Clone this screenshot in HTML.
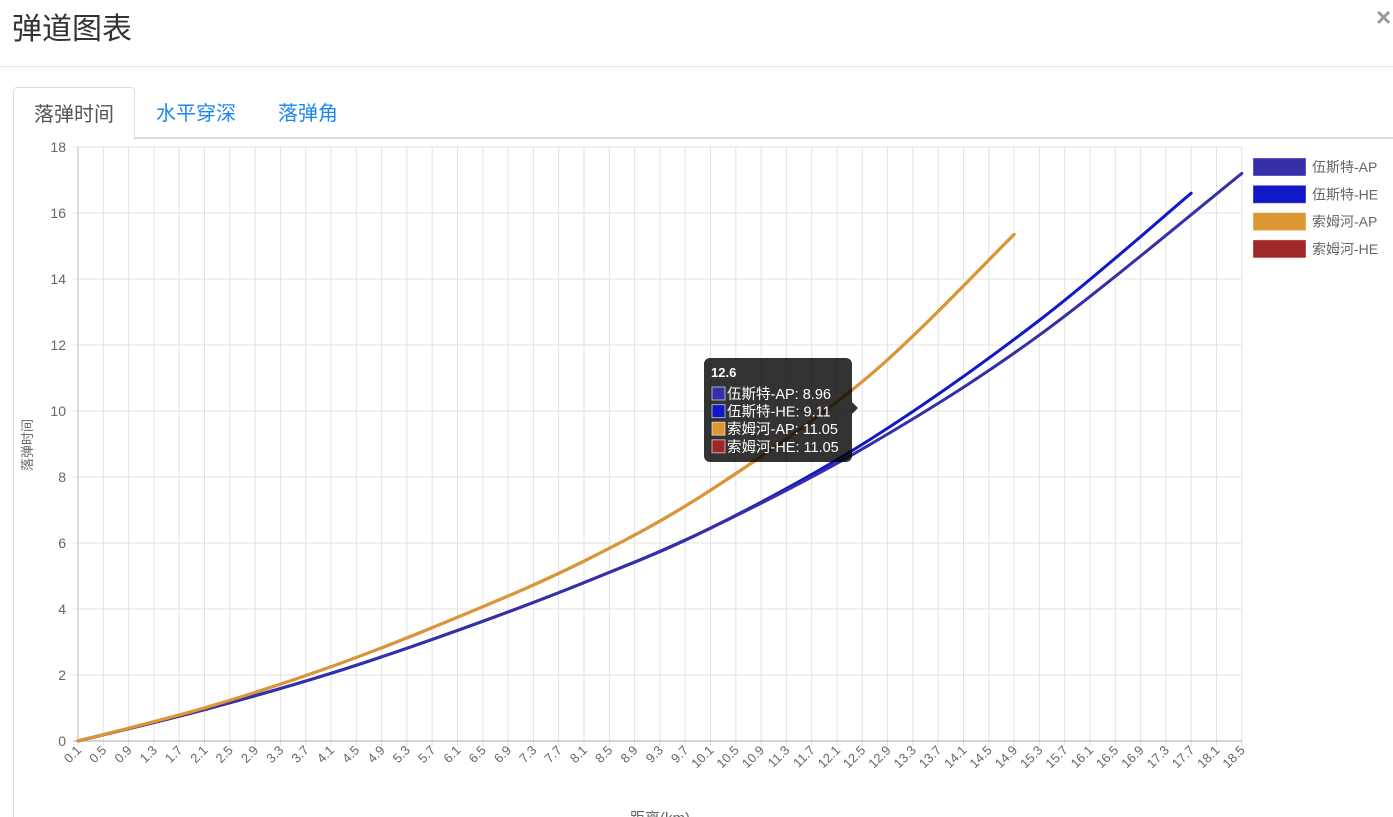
<!DOCTYPE html>
<html><head><meta charset="utf-8"><style>
body{margin:0;width:1393px;height:817px;overflow:hidden;background:#fff;font-family:"Liberation Sans","Noto Sans CJK SC",sans-serif;position:relative}
.t{position:absolute;left:12px;top:4px;font-size:30px;color:#333}
.x{position:absolute;left:1376px;top:2px;font-size:26px;color:#999;font-weight:bold}
.hr{position:absolute;left:0;top:66px;width:1393px;height:1px;background:#e5e5e5}
.bar{position:absolute;left:13px;top:137px;width:1380px;height:2px;background:#ddd}
.tab{position:absolute;top:87px;height:51px;font-size:20px;line-height:54px}
.a{left:13px;width:120px;border:1px solid #ddd;border-bottom:none;border-radius:4px 4px 0 0;background:#fff;color:#555;text-align:center;height:52px;z-index:2}
.vl{position:absolute;left:13px;top:139px;width:1px;height:678px;background:#ddd}
svg{position:absolute;left:0;top:0}
</style></head><body>
<div class="t">弹道图表</div><div class="x">×</div><div class="hr"></div>
<div class="bar"></div>
<div class="tab a">落弹时间</div>
<div class="tab" style="left:156px;color:#1e87f0">水平穿深</div>
<div class="tab" style="left:278px;color:#1e87f0">落弹角</div>
<div class="vl"></div>
<svg id="s" width="1393" height="817" font-family="Liberation Sans, Noto Sans CJK SC, sans-serif"></svg>
<script>
var s=document.getElementById('s'),h='';
function X(k){return 78+(k-0.1)/0.4*25.3}function Y(v){return 741-v*33}
for(var i=0;i<=46;i++){var x=X(0.1+i*0.4);h+='<line x1="'+x+'" y1="147" x2="'+x+'" y2="746" stroke="#e3e3e3"/>';
h+='<text transform="translate('+(x+4)+',751) rotate(-45)" text-anchor="end" font-size="13" fill="#666">'+(0.1+i*0.4).toFixed(1)+'</text>';}
for(var j=0;j<=9;j++){var y=Y(j*2);h+='<line x1="73" y1="'+y+'" x2="1242" y2="'+y+'" stroke="'+(j==0?'#aaa':'#e3e3e3')+'"/>';
h+='<text x="66" y="'+(y+5)+'" text-anchor="end" font-size="14" fill="#666">'+(j*2)+'</text>';}
h+='<line x1="78" y1="147" x2="78" y2="741" stroke="#bbb"/>';
function path(p,c){var pts=p.map(function(a){return[X(a[0]),Y(a[1])]});var d='M'+pts[0];
for(var i=0;i<pts.length-1;i++){var p0=pts[i-1]||pts[i],p1=pts[i],p2=pts[i+1],p3=pts[i+2]||p2;
d+='C'+(p1[0]+(p2[0]-p0[0])/6)+','+(p1[1]+(p2[1]-p0[1])/6)+' '+(p2[0]-(p3[0]-p1[0])/6)+','+(p2[1]-(p3[1]-p1[1])/6)+' '+p2;}
return '<path d="'+d+'" fill="none" stroke="'+c+'" stroke-width="3" stroke-linecap="round"/>';}
var sa=[[0.1,0],[2.1,1.0],[4.1,2.25],[6.1,3.75],[8.1,5.45],[10.1,7.6],[12.6,11.05],[14.9,15.35]];
h+=path([[0.1,0],[2.1,0.95],[4.1,2.05],[6.1,3.35],[8.1,4.8],[10.1,6.45],[12.6,9.11],[15.3,12.75],[17.7,16.6]],'#1018c8');
h+=path([[0.1,0],[2.1,0.95],[4.1,2.05],[6.1,3.35],[8.1,4.8],[10.1,6.45],[12.6,8.96],[15.3,12.3],[18.5,17.2]],'#3530a8');
h+=path(sa,'#a02828');h+=path(sa,'#dc9632');
h+='<text transform="translate(32,445) rotate(-90)" text-anchor="middle" font-size="13" fill="#666">落弹时间</text>';
h+='<text x="660" y="823" text-anchor="middle" font-size="15" fill="#666">距离(km)</text>';
var lg=[['伍斯特-AP','#3530a8'],['伍斯特-HE','#1018c8'],['索姆河-AP','#dc9632'],['索姆河-HE','#a02828']];
lg.forEach(function(l,i){var y=158+i*27.3;h+='<rect x="1253" y="'+y+'" width="53" height="18" fill="'+l[1]+'" stroke="rgba(255,255,255,0.4)"/>';
h+='<text x="1312" y="'+(y+14)+'" font-size="14" fill="#666">'+l[0]+'</text>';});
h+='<rect x="704" y="358" width="148" height="104" rx="6" fill="rgba(0,0,0,0.8)"/><path d="M852,402 L858,408 L852,414Z" fill="rgba(0,0,0,0.8)"/>';
h+='<text x="711" y="377" font-size="13" font-weight="bold" fill="#fff">12.6</text>';
var tt=['伍斯特-AP: 8.96','伍斯特-HE: 9.11','索姆河-AP: 11.05','索姆河-HE: 11.05'];
tt.forEach(function(t,i){var y=387+i*17.6;h+='<rect x="712" y="'+y+'" width="13" height="13" fill="'+lg[i][1]+'" stroke="rgba(255,255,255,0.6)"/>';
h+='<text x="727" y="'+(y+12)+'" font-size="14.5" fill="#fff">'+t+'</text>';});
s.innerHTML=h;
</script>
</body></html>
